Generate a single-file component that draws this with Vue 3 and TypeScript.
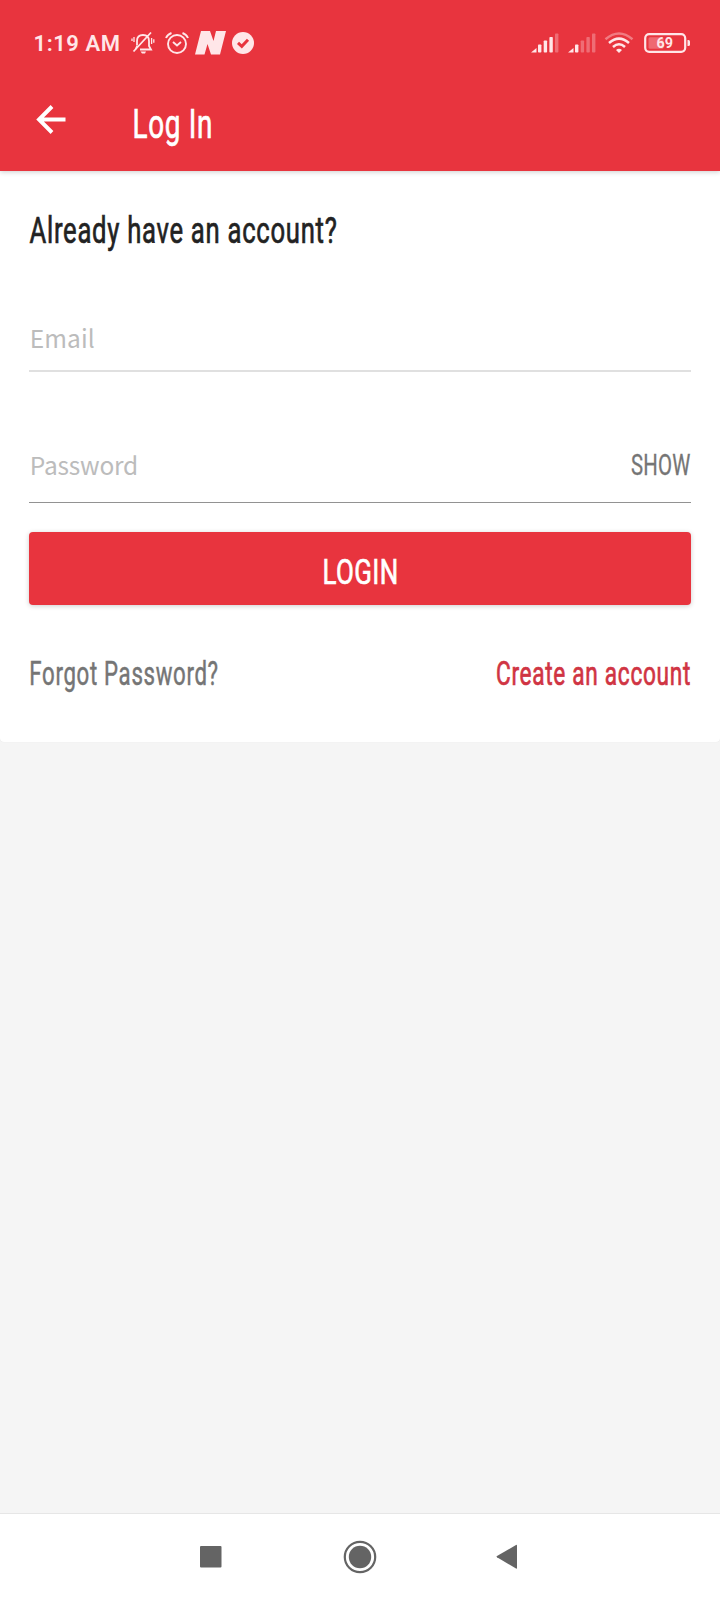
<script setup lang="ts">
interface Bar { x: number; h: number }
const bars: Bar[] = [
  { x: 0, h: 4 },
  { x: 7, h: 8 },
  { x: 12.7, h: 12 },
  { x: 18.4, h: 15.5 },
  { x: 24, h: 19 },
]
const signals: { name: string; level: number }[] = [
  { name: 'sim-a', level: 4 },
  { name: 'sim-b', level: 2 },
]
</script>

<template>
  <div class="screen">
    <header class="header">
      <div class="status">
        <svg class="clock" width="88" height="30"><text x=".5" y="23" textLength="86.5" lengthAdjust="spacing">1:19 AM</text></svg>
        <svg class="bell" width="24" height="24" viewBox="0 0 24 24" fill="none" stroke="currentColor" stroke-width="1.8">
          <path d="M6 14V10Q6 4 12 4Q18 4 18 10V15L20 18.5H9M6.5 14.5L4.5 18.5M2.5 20.5L20 1.5" />
          <path d="M3 6V11M1 7.5V10M20.6 7V13M22.8 8.2V11.8" stroke-width="1.3" />
          <path d="M9.5 20.5H15L14 22.5H11Z" fill="currentColor" stroke="none" />
        </svg>
        <svg class="alarm" width="24" height="24" viewBox="0 0 24 24" fill="none" stroke="currentColor" stroke-width="1.9">
          <circle cx="12" cy="13" r="9" />
          <path d="M8 11L12 14.5L16 11M1 7Q2.5 3.5 6.5 2M23 7Q21.5 3.5 17.5 2" />
        </svg>
        <svg class="news" width="31" height="24" viewBox="0 0 31 24">
          <path d="M6 0H15L18.5 10L21 0H31L25 23.5H16L12.5 13L9.5 23.5H0Z" fill="currentColor" />
        </svg>
        <svg class="check" width="22" height="22" viewBox="0 0 22 22">
          <circle cx="11" cy="11" r="11" fill="currentColor" />
          <path d="M6 10.8L9.8 14.3L16 7.8" fill="none" stroke="#e8343e" stroke-width="3" />
        </svg>
        <span class="spacer"></span>
        <svg v-for="s in signals" :key="s.name" class="signal" width="27" height="20" viewBox="0 0 27 20">
          <path d="M0 19.5L5.5 15V19.5Z" fill="currentColor" />
          <rect
            v-for="(b, i) in bars.slice(1)" :key="b.x" :x="b.x" :y="19.5 - b.h" width="3.4" :height="b.h" rx=".8"
            fill="currentColor" :opacity="i + 1 < s.level ? 1 : 0.32"
          />
        </svg>
        <svg class="wifi" width="30" height="22" viewBox="0 0 30 22" fill="none" stroke="currentColor" stroke-width="2.5">
          <path d="M1.5 7.2Q15 -4.2 28.5 7.2" opacity=".4" />
          <path d="M5 11Q15 2.2 25 11M9 15Q15 9.5 21 15" />
          <path d="M15 21L12 18Q15 15.5 18 18Z" fill="currentColor" stroke="none" />
        </svg>
        <svg class="battery" width="47" height="20" viewBox="0 0 47 20">
          <rect x="1.2" y="1.2" width="40" height="17.6" rx="4" fill="none" stroke="currentColor" stroke-width="2.2" />
          <rect x="4.5" y="4.3" width="15" height="11.4" rx="1.5" fill="currentColor" opacity=".3" />
          <path d="M43.5 7H44.5Q46 7 46 8.5V11.5Q46 13 44.5 13H43.5Z" fill="currentColor" />
          <text x="12.6" y="15.4" textLength="16.5" lengthAdjust="spacingAndGlyphs">69</text>
        </svg>
      </div>
      <div class="appbar">
        <svg class="back" width="30" height="30" viewBox="0 0 30 30" fill="none" stroke="#fff" stroke-width="3.9">
          <path d="M29.5 14.5H3M16 1.5L3 14.5L16 27.5" />
        </svg>
        <svg class="label title" width="82" height="50"><text x="-.5" y="38" textLength="80.5" lengthAdjust="spacingAndGlyphs">Log In</text></svg>
      </div>
    </header>

    <main class="card">
      <svg class="label heading" width="312" height="46"><text x=".5" y="33" textLength="308" lengthAdjust="spacingAndGlyphs">Already have an account?</text></svg>
      <div class="field email">
        <svg class="placeholder" width="70" height="40"><text x=".8" y="28" textLength="65" lengthAdjust="spacing">Email</text></svg>
      </div>
      <div class="field password">
        <svg class="placeholder" width="112" height="40"><text x=".8" y="28" textLength="108.5" lengthAdjust="spacing">Password</text></svg>
        <svg class="label show" width="66" height="40"><text x="2" y="28" textLength="59.5" lengthAdjust="spacingAndGlyphs">SHOW</text></svg>
      </div>
      <button class="login" type="button">
        <svg class="label" width="80" height="50"><text x="2.5" y="37" textLength="76" lengthAdjust="spacingAndGlyphs">LOGIN</text></svg>
      </button>
      <div class="links">
        <svg class="label forgot" width="194" height="44"><text x=".3" y="32.5" textLength="189.5" lengthAdjust="spacingAndGlyphs">Forgot Password?</text></svg>
        <svg class="label create" width="201" height="44"><text x="2" y="32.5" textLength="195" lengthAdjust="spacingAndGlyphs">Create an account</text></svg>
      </div>
    </main>

    <nav class="navbar">
      <svg class="recent" width="22" height="22"><rect width="21.5" height="21.5" rx="1" /></svg>
      <svg class="home" width="34" height="34">
        <circle cx="17" cy="17" r="15.2" fill="none" stroke="#646464" stroke-width="2.2" />
        <circle cx="17" cy="17" r="11.2" />
      </svg>
      <svg class="prev" width="22" height="26"><path d="M1 12L20 1Q21 .5 21 1.5V24Q21 25 20 24.5L1 13.2Q0 12.6 1 12Z" /></svg>
    </nav>
  </div>
</template>

<style scoped>
.screen {
  width: 720px;
  height: 1600px;
  display: flex;
  flex-direction: column;
  background: #f5f5f5;
  font-family: Roboto, "Liberation Sans", sans-serif;
  overflow: hidden;
}
svg { display: block; flex: none; overflow: visible; }
.header {
  height: 170.5px;
  flex: none;
  background: #e8343e;
  box-shadow: 0 1px 5px rgba(0, 0, 0, .2);
  z-index: 1;
}
.status {
  height: 86px;
  display: flex;
  align-items: center;
  box-sizing: border-box;
  padding: 0 29px 0 33px;
  color: #ffe6e8;
}
.clock { margin: 0 10px 0 0; }
.clock text { font-size: 22px; font-weight: 600; fill: currentColor; }
.alarm { margin-left: 9.5px; }
.news { margin-left: 6px; }
.check { margin-left: 6.5px; }
.spacer { flex: 1; }
.signal { margin: 0 9.5px 0 0; }
.wifi { margin-right: 10px; }
.battery text { font-size: 15px; font-weight: 700; fill: currentColor; }
.appbar { display: flex; align-items: flex-start; padding: 14px 0 0 36px; }
.back { margin-top: 4.5px; }
.title { margin-left: 66.5px; }
.label text {
  font-weight: 400;
  letter-spacing: 1px;
  fill: currentColor;
  stroke: currentColor;
  stroke-width: .7px;
}
.title { color: #fff; }
.title text { font-size: 40.5px; }
.card {
  height: 571px;
  flex: none;
  box-sizing: border-box;
  padding: 39.5px 29px 0;
  background: #fff;
  border-radius: 0 0 4px 4px;
  box-shadow: 0 0 1px rgba(0, 0, 0, .1);
}
.heading { color: #222; }
.heading text { font-size: 36.5px; }
.field { display: flex; justify-content: space-between; box-sizing: border-box; }
.email { height: 52px; margin-top: 64px; border-bottom: 2px solid #e0e0e0; }
.password { height: 56px; margin-top: 75px; border-bottom: 1px solid #929292; }
.placeholder text { font-family: "Noto Sans CJK SC", "Noto Sans", sans-serif; font-size: 24.5px; fill: #bcbcbc; }
.show { color: #757575; margin-right: -4px; }
.label.show text { font-size: 29.5px; stroke-width: .3px; letter-spacing: .3px; }
.login {
  display: flex;
  justify-content: center;
  align-items: flex-start;
  width: 662px;
  height: 73px;
  margin-top: 29px;
  padding: 14.5px 0 0;
  border: 0;
  border-radius: 4px;
  background: #e8343e;
  color: #fff;
  font-family: inherit;
  box-shadow: 0 1px 5px rgba(0, 0, 0, .2);
}
.login text { font-size: 35.5px; letter-spacing: .5px; }
.links { display: flex; justify-content: space-between; margin-top: 47px; }
.links text { font-size: 32.8px; }
.links .forgot text { stroke-width: .5px; }
.forgot { color: #757575; }
.create { color: #d03443; margin-right: -4px; }
.navbar {
  display: flex;
  align-items: center;
  height: 87px;
  box-sizing: border-box;
  margin-top: auto;
  padding-left: 200px;
  border-top: 1px solid #e6e6e6;
  background: #fff;
  fill: #646464;
}
.home { margin-left: 121.3px; }
.prev { margin-left: 119.2px; }
</style>

<style>
body { margin: 0; }
</style>
